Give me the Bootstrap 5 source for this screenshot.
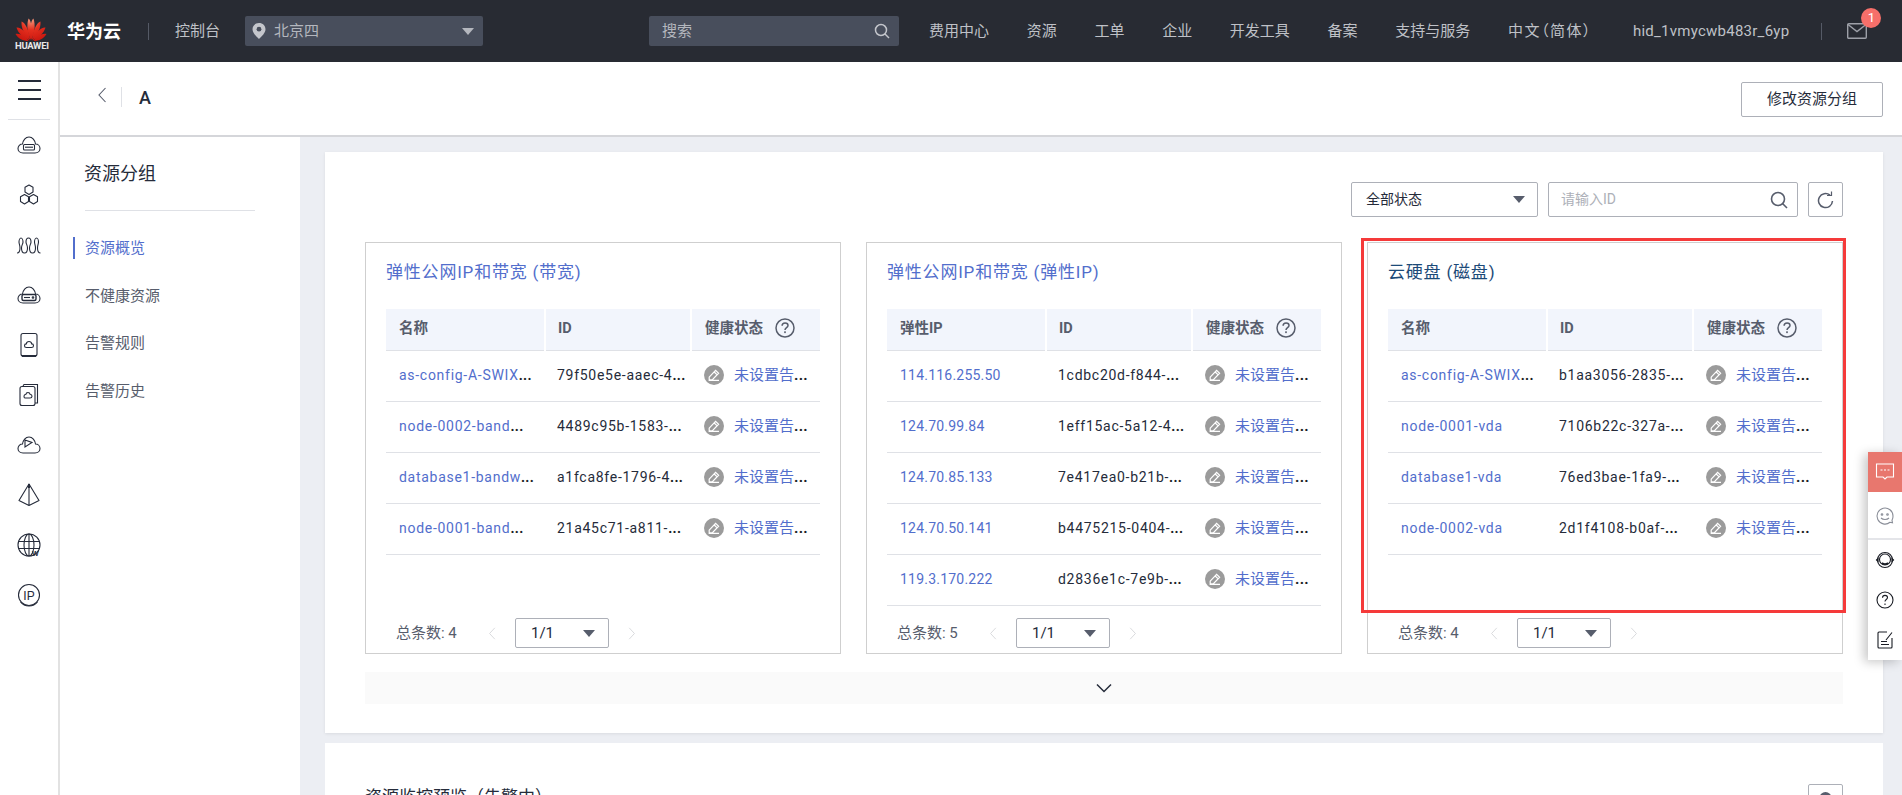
<!DOCTYPE html>
<html lang="zh-CN">
<head>
    <meta charset="UTF-8">
    <meta name="viewport" content="width=device-width, initial-scale=1.0">
    <title>资源分组</title>
    <link href="https://cdn.jsdelivr.net/npm/bootstrap@5.3.0/dist/css/bootstrap.min.css" rel="stylesheet">
    <style>
        html, body {
            height: 100%;
            overflow: hidden;
        }
        body {
            background-color: #eceef3;
            color: #252b3a;
            font-family: Roboto, "Noto Sans CJK SC", sans-serif;
            font-size: 15px;
        }
        .hw-top {
            height: 62px;
            background-color: #282b33;
            color: #bfc1c7;
            white-space: nowrap;
        }
        .hw-logo {
            width: 32px;
            margin-left: 15px;
            color: #e8e8e8;
            font-size: 9.5px;
            font-weight: 700;
            line-height: 10px;
            letter-spacing: -.3px;
            text-align: center;
            padding-top: 5px;
        }
        .hw-brand {
            margin-left: 20px;
            color: #fff;
            font-size: 18px;
            font-weight: 700;
        }
        .hw-vline {
            width: 1px;
            height: 17px;
            margin-left: 27px;
            background-color: #555a66;
        }
        .hw-console {
            margin-left: 26px;
        }
        .hw-region, .hw-search {
            height: 30px;
            background-color: #484e5c;
            border-radius: 2px;
            color: #b4b7be;
        }
        .hw-region {
            width: 238px;
            margin-left: 25px;
            padding: 0 9px 0 7px;
        }
        .hw-search {
            width: 250px;
            margin-left: 166px;
            padding: 0 9px 0 13px;
        }
        .hw-menu {
            margin-left: 30px;
            gap: 37.7px;
        }
        .hw-lang {
            font-feature-settings: "palt";
            letter-spacing: 1.5px;
        }
        .hw-user {
            margin-left: 41px;
            letter-spacing: .25px;
        }
        .hw-vline-end {
            margin-left: 32px;
        }
        .hw-mail {
            margin-left: 25px;
        }
        .hw-badge {
            position: absolute;
            top: -15px;
            left: 14px;
            width: 20px;
            height: 20px;
            line-height: 20px;
            border-radius: 50%;
            background-color: #f66f6a;
            color: #fff;
            font-size: 13px;
            text-align: center;
        }
        .tri-down {
            width: 0;
            height: 0;
            border-left: 6px solid transparent;
            border-right: 6px solid transparent;
            border-top: 7px solid #575d6c;
        }
        .hw-region .tri-down {
            border-top-color: #b4b7be;
        }
        .shell {
            height: calc(100vh - 62px);
            overflow: hidden;
        }
        .rail {
            width: 60px;
            flex: none;
            background-color: #fff;
            border-right: 2px solid #e2e2e2;
        }
        .rail-burger {
            height: 58px;
            margin: 0 8px;
            padding-top: 18px;
            border-bottom: 1px solid #dfe1e6;
        }
        .rail-burger i {
            display: block;
            width: 23px;
            height: 2px;
            margin: 0 auto 7px;
            background-color: #252b3a;
        }
        .rail-item {
            height: 50px;
            display: flex;
            align-items: center;
            justify-content: center;
        }
        .rail svg {
            width: 26px;
            height: 26px;
            fill: none;
            stroke: #252b3a;
            stroke-width: 1.1;
        }
        .body-col {
            min-width: 0;
            min-height: 0;
        }
        .sub-head {
            height: 75px;
            flex: none;
            background-color: #fff;
            border-bottom: 2px solid #d5d6da;
            padding: 20px 19px 0 37px;
        }
        .sub-back {
            width: 25px;
            height: 20px;
            margin-top: 5px;
            border-right: 1px solid #dfe1e6;
            color: #575d6c;
        }
        .sub-title {
            margin: 2px 0 0 17px;
            font-size: 18px;
            font-weight: 500;
        }
        .btn-edit-group {
            width: 142px;
            height: 35px;
            padding: 0;
            border: 1px solid #adb0b8;
            border-radius: 2px;
            background-color: #fff;
            color: #252b3a;
            font-size: 15px;
        }
        .lower-area {
            min-height: 0;
            overflow: hidden;
        }
        .side-menu {
            width: 240px;
            flex: none;
            background-color: #fff;
            padding-top: 24px;
        }
        .side-title {
            margin: 0 0 0 24px;
            width: 142px;
            font-size: 18px;
            line-height: 26px;
            font-weight: 400;
        }
        .side-line {
            width: 170px;
            height: 1px;
            margin: 23px 0 26px 25px;
            background-color: #dfe1e6;
        }
        .side-menu .nav-link {
            height: 22px;
            margin: 0 0 25.6px 13px;
            padding: 0 0 0 10px;
            line-height: 22px;
            border-left: 2px solid transparent;
            color: #575d6c;
        }
        .side-menu .nav-link.active {
            border-left-color: #526ecc;
            color: #526ecc;
        }
        .page-main {
            min-width: 0;
            padding: 15px 19px 0 25px;
            overflow: hidden;
        }
        .panel-box {
            height: 581px;
            padding: 30px 40px 0;
            background-color: #fff;
            box-shadow: 0 1px 3px rgba(0, 0, 0, .08);
        }
        .panel-next {
            margin-top: 10px;
            height: 52px;
            padding: 41px 40px 0;
            background-color: #fff;
            overflow: hidden;
        }
        .panel-title {
            font-size: 17px;
            font-weight: 400;
            line-height: 26px;
            margin: 0;
        }
        .filter-row {
            gap: 10px;
            height: 35px;
        }
        .pick-box {
            height: 35px;
            border: 1px solid #adb0b8;
            border-radius: 2px;
            background-color: #fff;
            color: #252b3a;
            font-size: 14px;
        }
        .pick-status {
            width: 187px;
            padding: 0 12px 0 14px;
        }
        .pick-search {
            width: 250px;
            padding: 0 9px 0 12px;
        }
        .pick-search input {
            border: 0;
            outline: 0;
            padding: 0;
            font-size: 14px;
            min-width: 0;
            flex: 1;
        }
        .pick-search input::placeholder {
            color: #adb0b8;
        }
        .pick-refresh {
            width: 35px;
            padding: 0;
            flex: none;
        }
        .res-row {
            gap: 25px;
            margin-top: 25px;
        }
        .res-card {
            position: relative;
            width: 476px;
            height: 412px;
            padding: 16px 20px 5px;
            border: 1px solid #cfcfcf;
        }
        .res-title {
            margin: 0 0 24px;
            font-size: 17px;
            line-height: 26px;
            font-weight: 400;
            letter-spacing: .8px;
            color: #526ecc;
            font-feature-settings: "palt";
        }
        .res-title.is-hover {
            color: #1c4a78;
        }
        .res-table {
            table-layout: fixed;
            margin: 0;
            font-size: 14px;
            letter-spacing: .72px;
        }
        .res-table th {
            height: 41px;
            padding: 0 0 0 13px;
            vertical-align: middle;
            background-color: #f2f5fc;
            border-bottom: 1px solid #dfe1e6;
            border-right: 2px solid #fff;
            color: #575d6c;
            font-weight: 700;
            font-size: 14.5px;
            letter-spacing: 0;
        }
        .res-table th:nth-child(1) {
            width: 159px;
        }
        .res-table th:nth-child(2) {
            width: 146px;
        }
        .res-table th:nth-child(2), .res-table td:nth-child(2) {
            padding-left: 12px;
        }
        .res-table th:last-child {
            border-right: 0;
        }
        .res-table td {
            height: 51px;
            padding: 0 0 0 13px;
            vertical-align: middle;
            white-space: nowrap;
            overflow: hidden;
            border-bottom: 1px solid #dfe1e6;
            color: #252b3a;
        }
        .res-table a, .alarm-link {
            color: #526ecc;
            text-decoration: none;
        }
        .res-table a.ip-addr {
            letter-spacing: .22px;
        }
        .alarm-link {
            font-size: 15px;
            margin-left: 10px;
            letter-spacing: 0;
        }
        .more-dots {
            color: #191c24;
            font-weight: 700;
            letter-spacing: .3px;
        }
        .ico-sm {
            width: 20px;
            height: 20px;
            vertical-align: -5px;
        }
        .res-foot {
            margin-top: auto;
            padding-left: 10px;
            color: #575d6c;
            font-size: 15px;
        }
        .res-total {
            width: 91px;
        }
        .ico-page {
            width: 10px;
            height: 13px;
            color: #d5d6da;
        }
        .page-pick {
            width: 94px;
            height: 30px;
            margin: 0 18px;
            padding: 0 13px 0 15px;
            border: 1px solid #adb0b8;
            border-radius: 2px;
            color: #252b3a;
        }
        .red-frame {
            position: absolute;
            top: -5px;
            left: -7px;
            right: -4px;
            height: 375px;
            border: 3px solid #f53a3a;
            pointer-events: none;
        }
        .more-bar {
            height: 32px;
            margin-top: 18px;
            background-color: #fafafa;
        }
        .float-bar {
            position: fixed;
            top: 452px;
            right: 0;
            width: 34px;
            background-color: #fff;
            box-shadow: -4px 2px 10px rgba(0, 0, 0, .22);
        }
        .float-item {
            height: 40px;
            display: flex;
            align-items: center;
            justify-content: center;
        }
        .float-item.is-red {
            background-color: #e8776e;
        }
        .float-item.is-smile {
            height: 46px;
            border-bottom: 2px solid #e4e5e9;
            margin-top: 2px;
        }
        .float-item svg {
            width: 20px;
            height: 20px;
            fill: none;
            stroke: #191c24;
            stroke-width: 1.1;
        }
        .float-item.is-red svg {
            stroke: #fff;
        }
        .float-item.is-smile svg {
            stroke: #8a8e98;
        }
    </style>
</head>
<body>
    <svg width="0" height="0" class="position-absolute">
        <defs>
            <radialGradient id="petalFill" cx="31" cy="14" r="24" gradientUnits="userSpaceOnUse">
                <stop offset="0" stop-color="#f5a184"/>
                <stop offset=".45" stop-color="#e5301f"/>
                <stop offset="1" stop-color="#c8150e"/>
            </radialGradient>
            <symbol id="icoEdit" viewBox="0 0 20 20">
                <circle cx="10" cy="10" r="10" fill="#9b9b9b"/>
                <path d="M5.2 12.2 11.6 5.4l3 2.8-6.4 6.6H5.2zM10.2 7l3 2.9M4.6 15.4H15" fill="none" stroke="#fff" stroke-width="1.2"/>
            </symbol>
            <symbol id="icoHelp" viewBox="0 0 20 20">
                <circle cx="10" cy="10" r="9" fill="none" stroke="#575d6c" stroke-width="1.5"/>
                <path d="M7.1 7.8c0-1.8 1.3-2.9 3-2.9s2.9 1 2.9 2.5c0 2.2-3 2.3-3 4.5" fill="none" stroke="#575d6c" stroke-width="1.5"/>
                <rect x="9.2" y="13.3" width="1.6" height="1.8" fill="#575d6c"/>
            </symbol>
            <symbol id="icoLeft" viewBox="0 0 10 16">
                <path d="M8.5 1 2 8l6.5 7" fill="none" stroke="currentColor" stroke-width="1.1"/>
            </symbol>
            <symbol id="icoRight" viewBox="0 0 10 16">
                <path d="M1.5 1 8 8l-6.5 7" fill="none" stroke="currentColor" stroke-width="1.1"/>
            </symbol>
        </defs>
    </svg>

    <nav class="hw-top d-flex align-items-center">
        <div class="hw-logo">
            <svg width="32" height="24" viewBox="15 12 32 24" class="d-block">
                <g fill="url(#petalFill)">
                    <path d="M31 35 C27 28 26.500 20 28.500 13.500 C31.500 15 32.500 26 31 35Z"/>
                    <path d="M31 35 C35 28 35.500 20 33.500 13.500 C30.500 15 29.500 26 31 35Z"/>
                    <path d="M30.200 35 C24.500 30 21 23 21.500 16.500 C25.500 17.500 29 26 30.200 35Z"/>
                    <path d="M31.800 35 C37.500 30 41 23 40.500 16.500 C36.500 17.500 33 26 31.800 35Z"/>
                    <path d="M29.500 35.500 C23 32.500 18 28 16.500 22.500 C21 22 27 28 29.500 35.500Z"/>
                    <path d="M32.500 35.500 C39 32.500 44 28 45.500 22.500 C41 22 35 28 32.500 35.500Z"/>
                    <path d="M28.500 36 C23 36 18 33.500 15.500 29 C20 28 25.500 31.500 28.500 36Z"/>
                    <path d="M33.500 36 C39 36 44 33.500 46.500 29 C42 28 36.500 31.500 33.500 36Z"/>
                </g>
            </svg>
            HUAWEI
        </div>
        <span class="hw-brand">华为云</span>
        <span class="hw-vline"></span>
        <span class="hw-console">控制台</span>
        <div class="hw-region d-flex align-items-center">
            <svg width="14" height="16" viewBox="0 0 14 16" class="me-2">
                <path d="M7 0C3.200 0 .5 2.700 .5 6.200 .5 10 4.500 13.500 7 16c2.500-2.500 6.500-6 6.500-9.800C13.500 2.700 10.800 0 7 0z" fill="#c4c6cc"/>
                <circle cx="7" cy="6.200" r="2.400" fill="#484e5c"/>
            </svg>
            <span>北京四</span>
            <span class="tri-down ms-auto"></span>
        </div>
        <div class="hw-search d-flex align-items-center justify-content-between">
            <span>搜索</span>
            <svg width="16" height="16" viewBox="0 0 16 16" fill="none" stroke="#c4c6cc" stroke-width="1.500">
                <circle cx="7" cy="7" r="5.500"/>
                <path d="M11 11l4 4"/>
            </svg>
        </div>
        <div class="hw-menu d-flex align-items-center">
            <span>费用中心</span>
            <span>资源</span>
            <span>工单</span>
            <span>企业</span>
            <span>开发工具</span>
            <span>备案</span>
            <span>支持与服务</span>
            <span class="hw-lang">中文（简体）</span>
        </div>
        <span class="hw-user">hid_1vmycwb483r_6yp</span>
        <span class="hw-vline hw-vline-end"></span>
        <div class="position-relative hw-mail">
            <svg width="20" height="16" viewBox="0 0 20 16" fill="none" stroke="#9da0a8" stroke-width="1.400" class="d-block">
                <rect x=".7" y=".7" width="18.600" height="14.600" rx="1"/>
                <path d="M1 1.500l9 7 9-7"/>
            </svg>
            <span class="hw-badge">1</span>
        </div>
    </nav>

    <div class="shell d-flex">
        <aside class="rail">
            <div class="rail-burger"><i></i><i></i><i></i></div>
            <div class="rail-list">
                <div class="rail-item">
                    <svg viewBox="0 0 26 26"><path d="M7 21h12c3 0 5-2 5-4.500S22 12 19.500 12C19 8.500 16.500 5 13 5S7 8.500 6.500 12C4 12 2 14 2 16.500S4 21 7 21z"/><rect x="7.500" y="12.500" width="11" height="5.500" rx="1"/><path d="M9 15.200h8"/></svg>
                </div>
                <div class="rail-item">
                    <svg viewBox="0 0 26 26"><path d="M13 3l4 2.300v4.800l-4 2.300-4-2.300V5.300zM8.500 12.500l4 2.300v4.800l-4 2.300-4-2.300v-4.800zM17.500 12.500l4 2.300v4.800l-4 2.300-4-2.300v-4.800z" stroke-linejoin="round"/></svg>
                </div>
                <div class="rail-item">
                    <svg viewBox="0 0 26 26"><path d="M1 21c2.500 0 3-2 3-5s-1-4-1-6 1-4 2-4 2 2 2 4-1.500 3-1.500 6 1 5 3 5 3-2 3-5-1.500-4-1.500-6 1-4 2.500-4 2.500 2 2.500 4-1.500 3-1.500 6 1 5 3 5 3-2 3-5-1-4-1-6 1-4 2-4 2 2 2 4-1 3-1 6 .5 5 3 5"/></svg>
                </div>
                <div class="rail-item">
                    <svg viewBox="0 0 26 26"><path d="M7 21h12c3 0 5-2 5-4.500S22 12 19.500 12C19 8.500 16.500 5 13 5S7 8.500 6.500 12C4 12 2 14 2 16.500S4 21 7 21z"/><rect x="6" y="12.500" width="14" height="6" rx="1.500" stroke-width="1.400"/><path d="M8 15.500h6"/><circle cx="17" cy="15.500" r=".8"/></svg>
                </div>
                <div class="rail-item">
                    <svg viewBox="0 0 26 26"><rect x="5" y="1.500" width="16" height="22.500" rx="2"/><path d="M6 24h14" stroke-width="2"/><path d="M10.500 15.500h5c1.300 0 2-.8 2-1.800s-.8-1.800-1.800-1.800C15.500 10.500 14.500 9.500 13 9.500s-2.500 1-2.700 2.400c-1 0-1.800.8-1.800 1.800s.7 1.800 2 1.800z"/></svg>
                </div>
                <div class="rail-item">
                    <svg viewBox="0 0 26 26"><path d="M7 4l1-1.500h13.500v18.500H19"/><rect x="4" y="4.500" width="15" height="19" rx="2"/><path d="M9 16h5c1 0 2-.8 2-1.800s-.8-1.700-1.800-1.700c-.3-1.300-1.100-2-2.200-2s-2 .8-2.200 2c-1 0-1.800.7-1.800 1.700S8 16 9 16z"/></svg>
                </div>
                <div class="rail-item">
                    <svg viewBox="0 0 26 26"><path d="M7 21h12c3 0 5-2 5-4.500S22 12 19.500 12C19 8.500 16.500 5 13 5S7 8.500 6.500 12C4 12 2 14 2 16.500S4 21 7 21z"/><path d="M9 8v7l7-4.500z"/></svg>
                </div>
                <div class="rail-item">
                    <svg viewBox="0 0 26 26"><path d="M13 2L3 18.500l10 5 10-5zM13 2v21.500" stroke-linejoin="round"/><path d="M13 2v4" stroke-width="2"/></svg>
                </div>
                <div class="rail-item">
                    <svg viewBox="0 0 26 26"><circle cx="13" cy="13" r="11"/><ellipse cx="13" cy="13" rx="5" ry="11"/><path d="M2 9.500h22M2 16.500h22M13 2v22"/><text x="16" y="24" font-family="Liberation Sans, sans-serif" font-size="7" font-weight="700" fill="#252b3a" stroke="none">W</text></svg>
                </div>
                <div class="rail-item">
                    <svg viewBox="0 0 26 26"><circle cx="13" cy="13" r="10.500"/><path d="M4.500 20c2 2.500 5 4 8.500 4s6.500-1.500 8.500-4"/><text x="13" y="17.500" text-anchor="middle" font-family="Liberation Sans, sans-serif" font-size="12" fill="#252b3a" stroke="none">IP</text></svg>
                </div>
            </div>
        </aside>

        <div class="body-col d-flex flex-column flex-grow-1">
            <header class="sub-head d-flex">
                <div class="sub-back">
                    <svg width="10" height="16" class="d-block"><use href="#icoLeft"/></svg>
                </div>
                <span class="sub-title">A</span>
                <button class="btn btn-edit-group ms-auto" type="button">修改资源分组</button>
            </header>

            <div class="lower-area d-flex flex-grow-1">
                <div class="side-menu">
                    <h2 class="side-title">资源分组</h2>
                    <div class="side-line"></div>
                    <nav class="nav flex-column">
                        <a class="nav-link active" href="#">资源概览</a>
                        <a class="nav-link" href="#">不健康资源</a>
                        <a class="nav-link" href="#">告警规则</a>
                        <a class="nav-link" href="#">告警历史</a>
                    </nav>
                </div>

                <main class="page-main flex-grow-1">
                    <section class="panel-box">
                        <div class="filter-row d-flex justify-content-end">
                            <button class="btn pick-box pick-status d-flex align-items-center justify-content-between" type="button">
                                <span>全部状态</span>
                                <span class="tri-down"></span>
                            </button>
                            <div class="pick-box pick-search d-flex align-items-center">
                                <input type="text" placeholder="请输入ID">
                                <svg width="18" height="18" viewBox="0 0 18 18" fill="none" stroke="#575d6c" stroke-width="1.600">
                                    <circle cx="8" cy="8" r="6.500"/>
                                    <path d="M12.500 12.500l4.500 4.500"/>
                                </svg>
                            </div>
                            <button class="btn pick-box pick-refresh d-flex align-items-center justify-content-center" type="button">
                                <svg width="17" height="18" viewBox="0 0 17 18" fill="none" stroke="#575d6c" stroke-width="1.500">
                                    <path d="M13 4.200A7 7 0 1 0 15.500 10"/>
                                    <path d="M10 4.500h4.500V.5" stroke-width="1.200"/>
                                </svg>
                            </button>
                        </div>

                        <div class="res-row d-flex">
                            <div class="res-card d-flex flex-column">
                                <h3 class="res-title">弹性公网IP和带宽 (带宽)</h3>
                                <table class="table res-table">
                                    <thead>
                                        <tr><th>名称</th><th>ID</th><th>健康状态 <svg class="ico-sm ms-2"><use href="#icoHelp"/></svg></th></tr>
                                    </thead>
                                    <tbody>
                                        <tr><td><a href="#">as-config-A-SWIX<span class="more-dots">...</span></a></td><td>79f50e5e-aaec-4<span class="more-dots">...</span></td><td><svg class="ico-sm"><use href="#icoEdit"/></svg><a class="alarm-link" href="#">未设置告<span class="more-dots">...</span></a></td></tr>
                                        <tr><td><a href="#">node-0002-band<span class="more-dots">...</span></a></td><td>4489c95b-1583-<span class="more-dots">...</span></td><td><svg class="ico-sm"><use href="#icoEdit"/></svg><a class="alarm-link" href="#">未设置告<span class="more-dots">...</span></a></td></tr>
                                        <tr><td><a href="#">database1-bandw<span class="more-dots">...</span></a></td><td>a1fca8fe-1796-4<span class="more-dots">...</span></td><td><svg class="ico-sm"><use href="#icoEdit"/></svg><a class="alarm-link" href="#">未设置告<span class="more-dots">...</span></a></td></tr>
                                        <tr><td><a href="#">node-0001-band<span class="more-dots">...</span></a></td><td>21a45c71-a811-<span class="more-dots">...</span></td><td><svg class="ico-sm"><use href="#icoEdit"/></svg><a class="alarm-link" href="#">未设置告<span class="more-dots">...</span></a></td></tr>
                                    </tbody>
                                </table>
                                <div class="res-foot d-flex align-items-center">
                                    <span class="res-total">总条数: 4</span>
                                    <svg class="ico-page"><use href="#icoLeft"/></svg>
                                    <div class="page-pick d-flex align-items-center justify-content-between"><span>1/1</span><span class="tri-down"></span></div>
                                    <svg class="ico-page"><use href="#icoRight"/></svg>
                                </div>
                            </div>

                            <div class="res-card d-flex flex-column">
                                <h3 class="res-title">弹性公网IP和带宽 (弹性IP)</h3>
                                <table class="table res-table">
                                    <thead>
                                        <tr><th>弹性IP</th><th>ID</th><th>健康状态 <svg class="ico-sm ms-2"><use href="#icoHelp"/></svg></th></tr>
                                    </thead>
                                    <tbody>
                                        <tr><td><a class="ip-addr" href="#">114.116.255.50</a></td><td>1cdbc20d-f844-<span class="more-dots">...</span></td><td><svg class="ico-sm"><use href="#icoEdit"/></svg><a class="alarm-link" href="#">未设置告<span class="more-dots">...</span></a></td></tr>
                                        <tr><td><a class="ip-addr" href="#">124.70.99.84</a></td><td>1eff15ac-5a12-4<span class="more-dots">...</span></td><td><svg class="ico-sm"><use href="#icoEdit"/></svg><a class="alarm-link" href="#">未设置告<span class="more-dots">...</span></a></td></tr>
                                        <tr><td><a class="ip-addr" href="#">124.70.85.133</a></td><td>7e417ea0-b21b-<span class="more-dots">...</span></td><td><svg class="ico-sm"><use href="#icoEdit"/></svg><a class="alarm-link" href="#">未设置告<span class="more-dots">...</span></a></td></tr>
                                        <tr><td><a class="ip-addr" href="#">124.70.50.141</a></td><td>b4475215-0404-<span class="more-dots">...</span></td><td><svg class="ico-sm"><use href="#icoEdit"/></svg><a class="alarm-link" href="#">未设置告<span class="more-dots">...</span></a></td></tr>
                                        <tr><td><a class="ip-addr" href="#">119.3.170.222</a></td><td>d2836e1c-7e9b-<span class="more-dots">...</span></td><td><svg class="ico-sm"><use href="#icoEdit"/></svg><a class="alarm-link" href="#">未设置告<span class="more-dots">...</span></a></td></tr>
                                    </tbody>
                                </table>
                                <div class="res-foot d-flex align-items-center">
                                    <span class="res-total">总条数: 5</span>
                                    <svg class="ico-page"><use href="#icoLeft"/></svg>
                                    <div class="page-pick d-flex align-items-center justify-content-between"><span>1/1</span><span class="tri-down"></span></div>
                                    <svg class="ico-page"><use href="#icoRight"/></svg>
                                </div>
                            </div>

                            <div class="res-card d-flex flex-column">
                                <h3 class="res-title is-hover">云硬盘 (磁盘)</h3>
                                <table class="table res-table">
                                    <thead>
                                        <tr><th>名称</th><th>ID</th><th>健康状态 <svg class="ico-sm ms-2"><use href="#icoHelp"/></svg></th></tr>
                                    </thead>
                                    <tbody>
                                        <tr><td><a href="#">as-config-A-SWIX<span class="more-dots">...</span></a></td><td>b1aa3056-2835-<span class="more-dots">...</span></td><td><svg class="ico-sm"><use href="#icoEdit"/></svg><a class="alarm-link" href="#">未设置告<span class="more-dots">...</span></a></td></tr>
                                        <tr><td><a href="#">node-0001-vda</a></td><td>7106b22c-327a-<span class="more-dots">...</span></td><td><svg class="ico-sm"><use href="#icoEdit"/></svg><a class="alarm-link" href="#">未设置告<span class="more-dots">...</span></a></td></tr>
                                        <tr><td><a href="#">database1-vda</a></td><td>76ed3bae-1fa9-<span class="more-dots">...</span></td><td><svg class="ico-sm"><use href="#icoEdit"/></svg><a class="alarm-link" href="#">未设置告<span class="more-dots">...</span></a></td></tr>
                                        <tr><td><a href="#">node-0002-vda</a></td><td>2d1f4108-b0af-<span class="more-dots">...</span></td><td><svg class="ico-sm"><use href="#icoEdit"/></svg><a class="alarm-link" href="#">未设置告<span class="more-dots">...</span></a></td></tr>
                                    </tbody>
                                </table>
                                <div class="res-foot d-flex align-items-center">
                                    <span class="res-total">总条数: 4</span>
                                    <svg class="ico-page"><use href="#icoLeft"/></svg>
                                    <div class="page-pick d-flex align-items-center justify-content-between"><span>1/1</span><span class="tri-down"></span></div>
                                    <svg class="ico-page"><use href="#icoRight"/></svg>
                                </div>
                                <div class="red-frame"></div>
                            </div>
                        </div>

                        <div class="more-bar d-flex align-items-center justify-content-center">
                            <svg width="16" height="10" viewBox="0 0 16 10" fill="none" stroke="#252b3a" stroke-width="1.500"><path d="M1 1.500l7 7 7-7"/></svg>
                        </div>
                    </section>

                    <section class="panel-next d-flex justify-content-between">
                        <h3 class="panel-title">资源监控预览（告警中）</h3>
                        <button class="btn pick-box pick-refresh d-flex justify-content-center pt-1" type="button">
                            <svg width="17" height="18" viewBox="0 0 17 18" fill="#575d6c"><circle cx="8.500" cy="9" r="6"/><circle cx="8.500" cy="9" r="2" fill="#fff"/></svg>
                        </button>
                    </section>
                </main>
            </div>
        </div>
    </div>

    <div class="float-bar">
        <div class="float-item is-red">
            <svg viewBox="0 0 20 20"><path d="M1.500 2h17v13h-6.500l-2 2-2-2H1.500z"/><path d="M5.500 8h2M9 8h2M12.500 8h2"/></svg>
        </div>
        <div class="float-item is-smile">
            <svg viewBox="0 0 20 20"><path d="M18 10a8 8 0 1 0-3 6.300l2.500.5-.5-2.500A8 8 0 0 0 18 10z"/><circle cx="7" cy="8.500" r=".8"/><circle cx="12.500" cy="8.500" r=".8"/><path d="M6 12c2 2 6 2 8 0"/></svg>
        </div>
        <div class="float-item">
            <svg viewBox="0 0 20 20"><circle cx="10" cy="10" r="7.500"/><circle cx="10" cy="9.500" r="5.500"/><path d="M1.500 10l1.500-1.500v3zM18.500 10L17 8.500v3z" fill="#191c24"/><path d="M7 13c2 1.500 4 1.500 6 0" stroke-width="1.800"/></svg>
        </div>
        <div class="float-item">
            <svg viewBox="0 0 20 20"><circle cx="10" cy="10" r="8"/><path d="M7.500 7.800c0-1.500 1-2.400 2.500-2.400s2.500.9 2.500 2.200c0 1.900-2.500 2-2.500 4M10 13.500v1.500"/></svg>
        </div>
        <div class="float-item">
            <svg viewBox="0 0 20 20"><path d="M17 8v9a1 1 0 0 1-1 1H4a1 1 0 0 1-1-1V3a1 1 0 0 1 1-1h8"/><path d="M6 11.500h6M6 14.500h8M11 10l6-7.500"/></svg>
        </div>
    </div>
    <script src="https://cdn.jsdelivr.net/npm/bootstrap@5.3.0/dist/js/bootstrap.bundle.min.js"></script>
</body>
</html>
